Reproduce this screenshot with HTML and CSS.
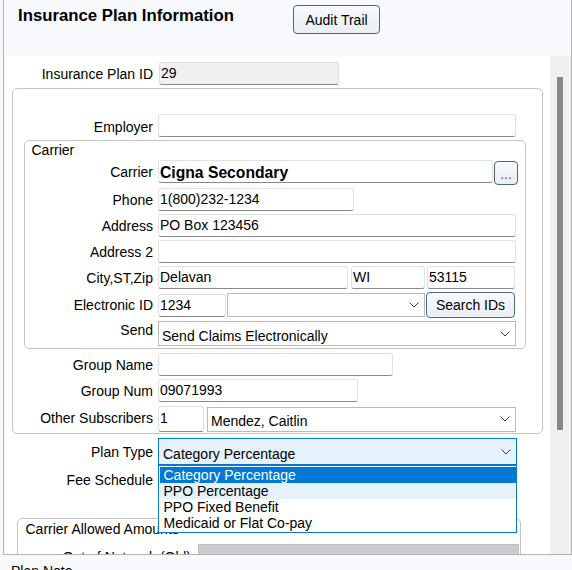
FILE: index.html
```html
<!DOCTYPE html>
<html>
<head>
<meta charset="utf-8">
<title>Insurance Plan Information</title>
<link rel="stylesheet" href="styles.css">
</head>
<body>
<div class="panel">
  <div class="head">
    <div class="title">Insurance Plan Information</div>
    <button class="btn audit">Audit Trail</button>
  </div>
  <div class="body">
    <div class="content">
      <div class="row r-id">
        <span class="lbl w-page gap6">Insurance Plan ID</span>
        <div class="tb dis w-id">29</div>
      </div>

      <div class="group outer">
        <div class="row r-emp">
          <span class="lbl w-outer">Employer</span>
          <div class="tb w-full"></div>
        </div>

        <div class="group carrier">
          <div class="legend lg-carrier">Carrier</div>
          <div class="row r-carrier">
            <span class="lbl w-car">Carrier</span>
            <div class="tb bold w-carrier">Cigna Secondary</div>
            <button class="btn dots">...</button>
          </div>
          <div class="row r-next">
            <span class="lbl w-car">Phone</span>
            <div class="tb w-phone">1(800)232-1234</div>
          </div>
          <div class="row r-next">
            <span class="lbl w-car">Address</span>
            <div class="tb w-full">PO Box 123456</div>
          </div>
          <div class="row r-next">
            <span class="lbl w-car">Address 2</span>
            <div class="tb w-full"></div>
          </div>
          <div class="row r-next">
            <span class="lbl w-car">City,ST,Zip</span>
            <div class="tb w-city">Delavan</div>
            <div class="tb w-st">WI</div>
            <div class="tb w-zip">53115</div>
          </div>
          <div class="row r-eid">
            <span class="lbl w-car">Electronic ID</span>
            <div class="tb w-eid">1234</div>
            <div class="cb w-eidcb h24">
              <span class="cb-text"></span>
              <svg class="chev" width="10" height="6" viewBox="0 0 10 6"><path d="M0.5 0.5 L5 5 L9.5 0.5" fill="none" stroke="#3c3c3c" stroke-width="1"/></svg>
            </div>
            <button class="btn search">Search IDs</button>
          </div>
          <div class="row r-send">
            <span class="lbl w-car up1">Send</span>
            <div class="cb w-full">
              <span class="cb-text">Send Claims Electronically</span>
              <svg class="chev" width="10" height="6" viewBox="0 0 10 6"><path d="M0.5 0.5 L5 5 L9.5 0.5" fill="none" stroke="#3c3c3c" stroke-width="1"/></svg>
            </div>
          </div>
        </div>

        <div class="row r-gname">
          <span class="lbl w-outer">Group Name</span>
          <div class="tb w-gname"></div>
        </div>
        <div class="row r-gnum">
          <span class="lbl w-outer">Group Num</span>
          <div class="tb w-gnum">09071993</div>
        </div>
        <div class="row r-other">
          <span class="lbl w-outer up4">Other Subscribers</span>
          <div class="tb h26 w-one">1</div>
          <div class="cb w-mendez">
            <span class="cb-text">Mendez, Caitlin</span>
            <svg class="chev" width="10" height="6" viewBox="0 0 10 6"><path d="M0.5 0.5 L5 5 L9.5 0.5" fill="none" stroke="#3c3c3c" stroke-width="1"/></svg>
          </div>
        </div>
      </div>

      <div class="row r-plan">
        <span class="lbl w-page">Plan Type</span>
        <div class="plan-wrap">
          <div class="cb plan">
            <span class="cb-text">Category Percentage</span>
            <svg class="chev" width="10" height="6" viewBox="0 0 10 6"><path d="M0.5 0.5 L5 5 L9.5 0.5" fill="none" stroke="#3c3c3c" stroke-width="1"/></svg>
          </div>
          <div class="list">
            <div class="li sel">Category Percentage</div>
            <div class="li hov">PPO Percentage</div>
            <div class="li">PPO Fixed Benefit</div>
            <div class="li">Medicaid or Flat Co-pay</div>
          </div>
        </div>
      </div>
      <div class="row r-fee">
        <span class="lbl w-page">Fee Schedule</span>
        <div class="cb w-full"><span class="cb-text"></span></div>
      </div>

      <div class="group allowed">
        <div class="legend lg-allowed">Carrier Allowed Amounts</div>
        <div class="row r-oon">
          <span class="lbl w-allow">Out of Network (Old)</span>
          <div class="cb gray">
            <span class="cb-text">None</span>
            <svg class="chev" width="10" height="6" viewBox="0 0 10 6"><path d="M0.5 0.5 L5 5 L9.5 0.5" fill="none" stroke="#5a5a5a" stroke-width="1"/></svg>
          </div>
        </div>
      </div>
    </div>
    <div class="scrollbar"><div class="thumb"></div></div>
  </div>
</div>
<div class="note">Plan Note</div>
</body>
</html>
```

FILE: styles.css
```css
* { box-sizing: border-box; }
html, body { margin: 0; padding: 0; }
body {
  width: 572px;
  height: 570px;
  overflow: hidden;
  background: #f7f9fc;
  font-family: "Liberation Sans", Arial, sans-serif;
  font-size: 14px;
  color: #000;
}

.panel {
  margin-left: 3px;
  width: 569px;
  height: 555px;
  border: 1px solid #b4b4b4;
  border-top: 0;
  display: flex;
  flex-direction: column;
}

.head {
  height: 56px;
  flex: none;
  display: flex;
  align-items: flex-start;
  padding-left: 14px;
}
.title {
  width: 275px;
  flex: none;
  margin-top: 6px;
  font-size: 16.75px;
  line-height: 20px;
  font-weight: bold;
  white-space: nowrap;
}

.btn {
  font-family: inherit;
  font-size: 14px;
  color: #000;
  border: 1px solid #4b687e;
  border-radius: 4px;
  background: linear-gradient(#f8fafc, #e9eef3);
  padding: 0;
  display: flex;
  align-items: center;
  justify-content: center;
  flex: none;
}
.audit { width: 87px; height: 29px; margin-top: 5px; padding-top: 1px; }
.dots { width: 24px; height: 24px; margin-left: 1px; align-self: flex-start; margin-top: 1px; color: #555; padding-top: 1px; }
.search { width: 89px; height: 26px; margin-left: 1px; }

.body {
  flex: 1;
  display: flex;
  background: #fff;
  overflow: hidden;
}
.content { width: 546px; flex: none; }
.scrollbar { width: 21px; flex: none; background: #f0f0f0; }
.thumb { width: 6px; height: 353px; margin: 21px 0 0 7px; background: #878787; }

/* rows */
.row { display: flex; align-items: center; }
.lbl {
  flex: none;
  text-align: right;
  line-height: 16px;
  white-space: nowrap;
  margin-right: 5px;
}
.gap6 { margin-right: 6px; }
.up1 { align-self: flex-start; margin-top: 1px; }
.up4 { align-self: flex-start; margin-top: 4px; }
.w-page { width: 149px; }
.w-outer { width: 140px; }
.w-car { width: 128px; }
.w-allow { width: 173px; margin-right: 7px; }

.r-id { margin-top: 6px; height: 23px; }
.r-emp { margin-top: 25px; height: 23px; }
.r-emp .lbl { margin-top: 2px; }
.r-carrier { margin-top: 2px; height: 23px; }
.r-next { margin-top: 3px; height: 23px; }
.r-carrier + .r-next { margin-top: 5px; }
.r-eid { margin-top: 3px; height: 26px; }
.r-send { margin-top: 3px; height: 25px; }
.r-gname { margin-top: 4px; height: 23px; }
.r-gnum { margin-top: 3px; height: 23px; }
.r-other { margin-top: 4px; height: 26px; }
.r-plan { margin-top: 4px; height: 27px; }
.r-fee { margin-top: 2px; height: 25px; }
.r-oon { margin-top: 7px; height: 25px; }

/* text boxes */
.tb {
  flex: none;
  height: 23px;
  border: 1px solid #e1e1e1;
  border-bottom-color: #8a8a8a;
  border-radius: 3px;
  background: #fff;
  padding: 0 1px;
  line-height: 21px;
  white-space: nowrap;
  overflow: hidden;
}
.tb.dis { background: #f0f0f0; border-color: #dedede; border-bottom-color: #8a8a8a; }
.tb.bold { font-weight: bold; font-size: 15.7px; padding-top: 2px; line-height: 19px; }
.tb.h26 { height: 26px; line-height: 23px; }

.w-id { width: 180px; }
.w-full { width: 358px; }
.w-carrier { width: 335px; }
.w-phone { width: 196px; }
.w-city { width: 190px; }
.w-st { width: 74px; margin-left: 3px; }
.w-zip { width: 88px; margin-left: 2px; }
.w-eid { width: 68px; }
.w-eidcb { width: 198px; margin-left: 1px; }
.w-gname { width: 235px; }
.w-gnum { width: 200px; }
.w-one { width: 46px; }
.w-mendez { width: 309px; margin-left: 3px; }

/* combo boxes */
.cb {
  flex: none;
  height: 25px;
  display: flex;
  align-items: center;
  border: 1px solid #bababa;
  background: #fff;
  padding: 0 5px 0 3px;
}
.cb.h24 { height: 24px; }
.cb-text {
  flex: 1;
  align-self: flex-start;
  padding-top: 5.5px;
  line-height: 16px;
  white-space: nowrap;
  overflow: hidden;
}
.chev { flex: none; display: block; }

.plan-wrap { position: relative; z-index: 2; flex: none; }
.cb.plan {
  width: 359px;
  height: 27px;
  background: #e5f1fb;
  border-color: #0078d7;
  padding-left: 4px;
}
.cb.plan .cb-text { padding-top: 6.5px; }
.list {
  position: absolute;
  left: 0;
  top: 27px;
  width: 359px;
  background: #fff;
  border: 1px solid #0a78cc;
  padding: 1px 0 1px 1px;
}
.li {
  height: 16px;
  line-height: 16px;
  padding-left: 3.5px;
  white-space: nowrap;
}
.li.sel { background: #0078d7; color: #fff; }
.li.hov { background: #e5f1fb; }

.cb.gray {
  width: 321px;
  background: #cccccc;
  border-color: #bdbdbd;
  color: #6d6d6d;
}

/* group boxes */
.group { border: 1px solid #c4c4c4; border-radius: 5px; }
.outer { margin: 3px 0 0 8px; width: 531px; padding-bottom: 1px; }
.carrier { margin: 3px 0 0 11px; width: 502px; padding-bottom: 2px; }
.allowed { margin: 26px 0 0 13px; width: 504px; height: 70px; }
.legend { line-height: 16px; margin-top: 1px; white-space: nowrap; }
.lg-carrier { padding-left: 6.5px; }
.lg-allowed { padding-left: 7.5px; margin-top: 2px; }

.note {
  margin: 8px 0 0 11px;
  line-height: 16px;
}
```
